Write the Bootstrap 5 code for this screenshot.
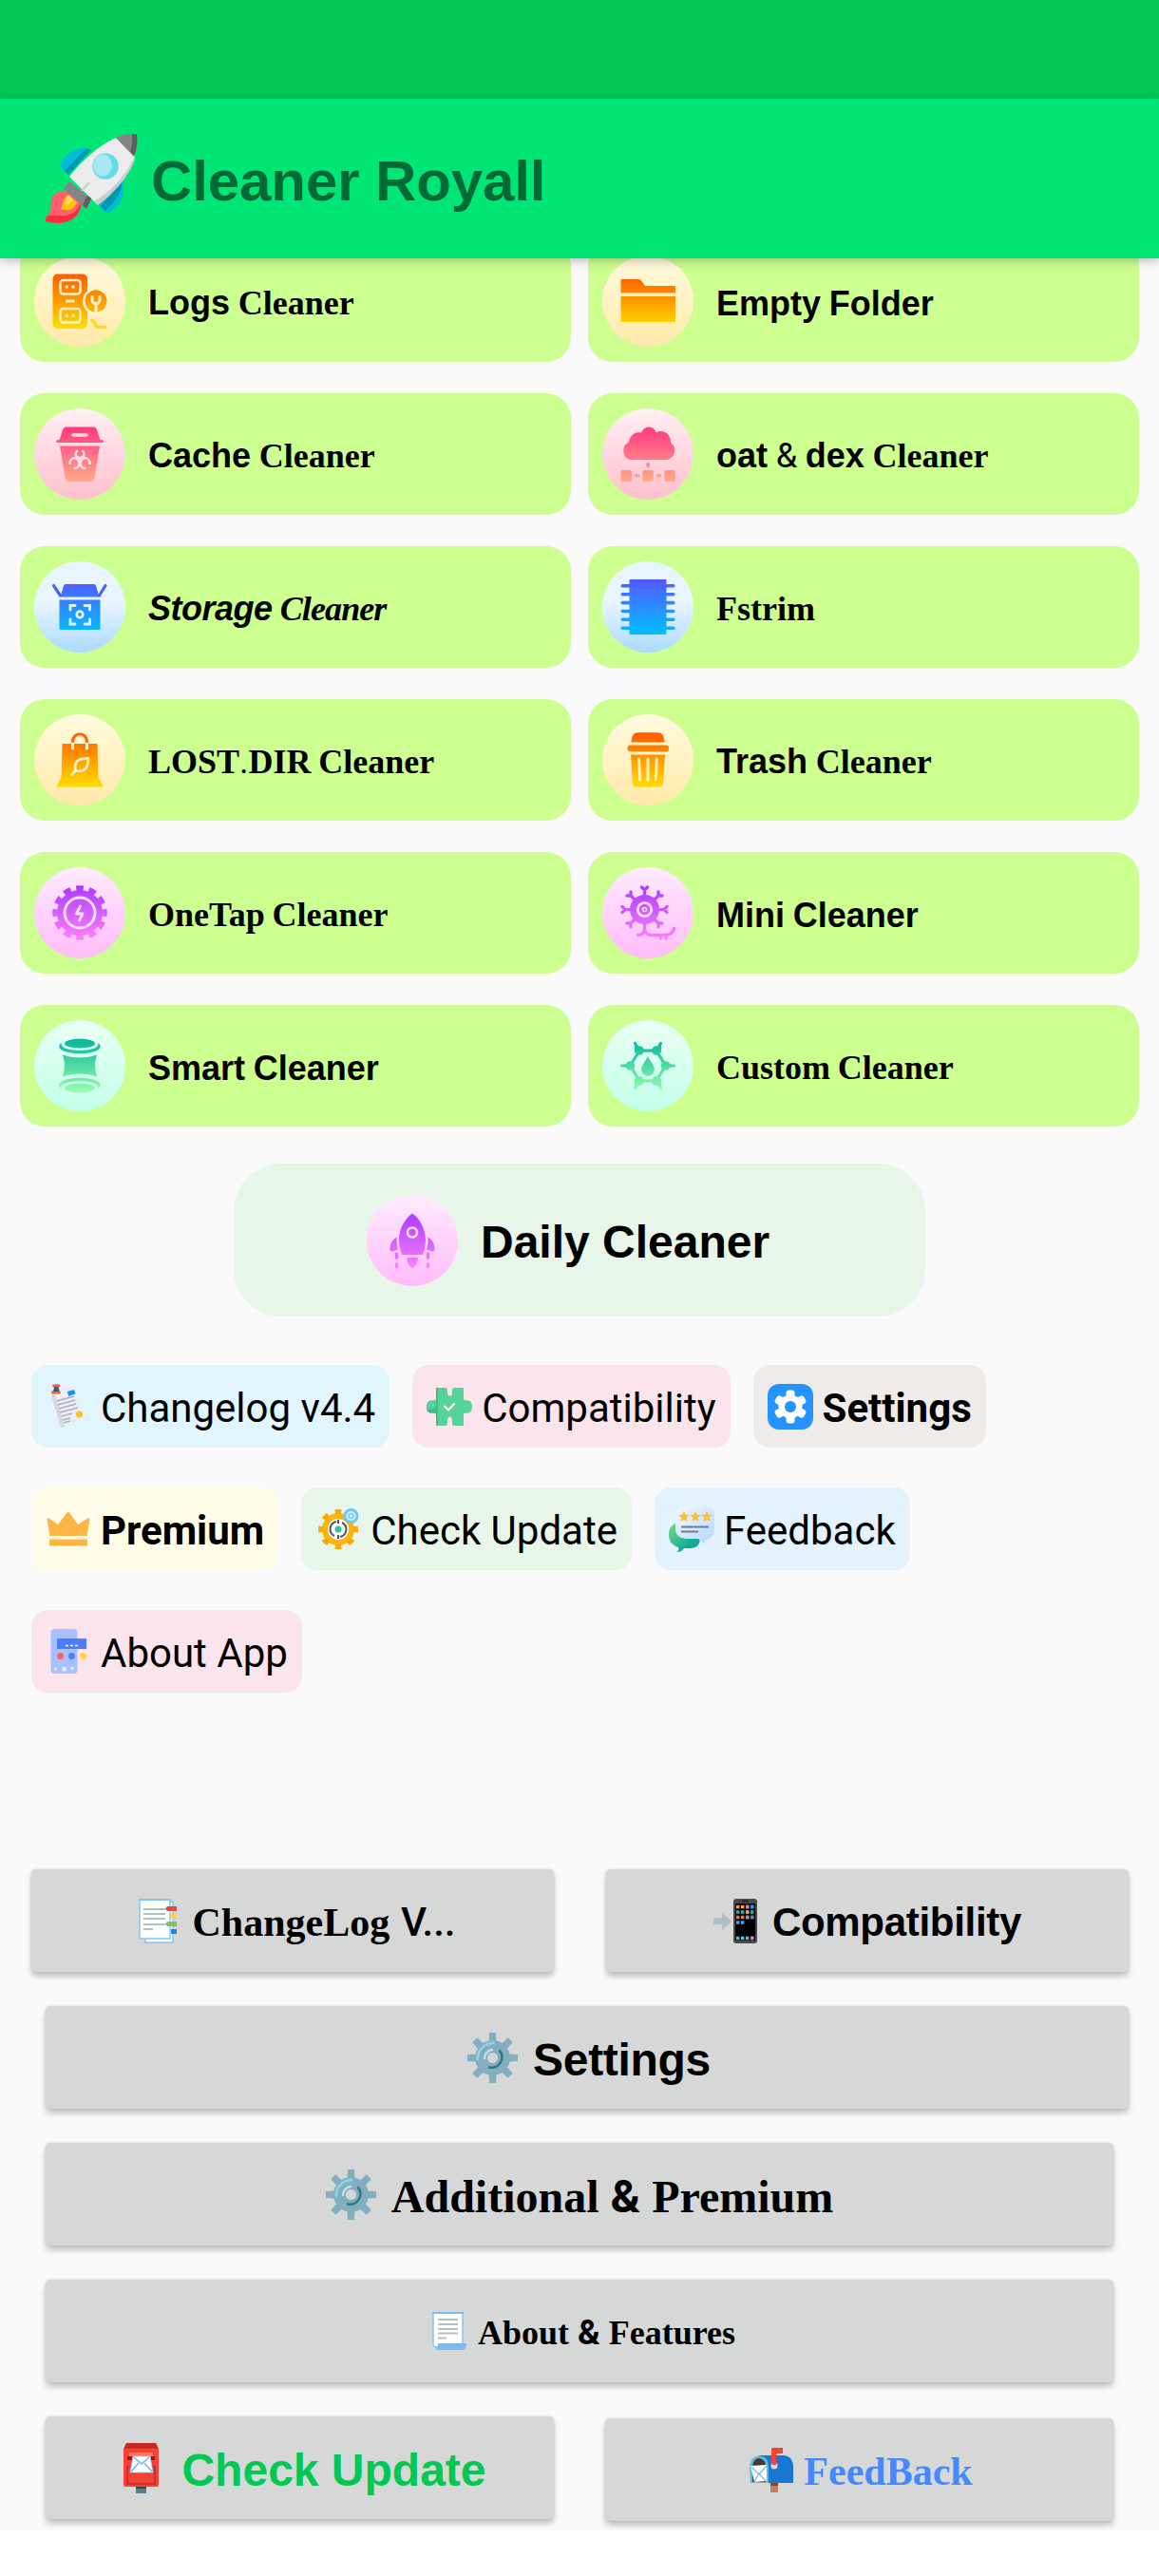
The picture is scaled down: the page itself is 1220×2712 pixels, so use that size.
<!DOCTYPE html>
<html lang="en">
<head>
<meta charset="utf-8">
<meta name="viewport" content="width=device-width, initial-scale=1">
<title>Cleaner Royall</title>
<link href="https://cdn.jsdelivr.net/npm/bootstrap@5.3.0/dist/css/bootstrap.min.css" rel="stylesheet">
<style>
  body { background:#fff; color:#000; font-family:"Liberation Sans",Arial,sans-serif; }
  .screen { width:1220px; height:2664px; background:#fafafa; }
  .statusbar { height:104px; background:#00c853; }
  .appbar { height:168px; background:#00e676; padding-left:48px; z-index:2; box-shadow:0 3px 10px rgba(0,0,0,.24); }
  .appname { font-size:60px; color:#006a36; margin-left:14px; letter-spacing:-.1px; }
  .lbl { padding-top:5px; line-height:1.15; white-space:pre; }
  .serif { font-family:"Liberation Serif","Times New Roman",serif; font-weight:700; }
  .sans { font-family:"Liberation Sans",Arial,sans-serif; font-weight:700; }
  .robo { font-family:Roboto,sans-serif; }
  .tools { margin-top:-19px; padding:0 21px; display:grid; grid-template-columns:580px 580px; column-gap:18px; row-gap:33px; }
  .tool { height:128px; border-radius:26px; background:#ccff90; padding-left:15px; font-size:36px; word-spacing:-1.3px; }
  .tool .lbl { margin-left:24px; }
  .slant { font-style:italic; letter-spacing:-.5px; }
  .slant .serif { letter-spacing:-.9px; }
  .daily { width:728px; height:161px; border-radius:50px; background:#e8f5e9; margin:39px 0 0 246px; padding-left:140px; font-size:48px; }
  .daily .lbl { margin-left:24px; }
  .disc { width:96px; height:96px; flex:none; border-radius:50%; }
  .d-yel { background:linear-gradient(#fffbdf,#ffe9a8); }
  .d-pnk { background:linear-gradient(#fff0f3,#ffc0cd); }
  .d-blu { background:linear-gradient(#e8f5ff 45%,#abdaff); }
  .d-pur { background:linear-gradient(#ffeaff,#ffbcf8); }
  .d-grn { background:linear-gradient(#eafff4,#c2ffe9); }
  .chips { margin:51px 33px 0; row-gap:42px; column-gap:24px; }
  .chip { height:87px; border-radius:17px; padding:0 15px; font-size:42px; font-family:Roboto,sans-serif; }
  .chip svg { width:48px; height:48px; margin-right:10px; flex:none; }
  .c-blue { background:#e1f5fe; } .c-pink { background:#fce4ec; } .c-brown { background:#efebe9; }
  .c-yellow { background:#fffde7; } .c-green { background:#e8f5e9; } .c-azure { background:#e3f2fd; }
  .panel { margin:186px 32px 0 33px; row-gap:36px; }
  .key { height:108px; border-radius:5px; background:#d6d7d7; font-size:42px; box-shadow:0 5px 6px rgba(0,0,0,.22),0 0 3px rgba(0,0,0,.12); }
  .key svg { flex:none; }
  .half { width:550px; } .half-s { width:535px; }
  .inset-l { margin-left:15px; } .inset-r { margin-right:16px; }
  .big { font-size:48px; } .sm36 { font-size:36px; }
  .drop2 { margin-top:2px; }
  .lead9 { padding-left:9px; } .lead4 { padding-left:4px; } .lead12 { padding-left:11px; }
  .snug { letter-spacing:-.3px; }
  .green-t { color:#00c853; } .blue-t { color:#448aff; }
</style>
<script src="https://cdn.jsdelivr.net/npm/bootstrap@5.3.0/dist/js/bootstrap.bundle.min.js"></script>
</head>
<body>
<!-- shared gradients -->
<svg width="0" height="0" class="position-absolute">
  <defs>
    <linearGradient id="gy" gradientUnits="userSpaceOnUse" x1="0" y1="19" x2="0" y2="77"><stop offset="0" stop-color="#ff5900"/><stop offset="1" stop-color="#ffdf00"/></linearGradient>
    <linearGradient id="gp" gradientUnits="userSpaceOnUse" x1="0" y1="19" x2="0" y2="77"><stop offset="0" stop-color="#ff3881"/><stop offset="1" stop-color="#ffa98d"/></linearGradient>
    <linearGradient id="gb" gradientUnits="userSpaceOnUse" x1="0" y1="19" x2="0" y2="77"><stop offset="0" stop-color="#5558ff"/><stop offset="1" stop-color="#00c0ff"/></linearGradient>
    <linearGradient id="gv" gradientUnits="userSpaceOnUse" x1="0" y1="19" x2="0" y2="77"><stop offset="0" stop-color="#a93aff"/><stop offset="1" stop-color="#ff81ff"/></linearGradient>
    <linearGradient id="gg" gradientUnits="userSpaceOnUse" x1="0" y1="19" x2="0" y2="77"><stop offset="0" stop-color="#00b59c"/><stop offset="1" stop-color="#9cffac"/></linearGradient>
    <linearGradient id="bub" x1="0" y1="0" x2="1" y2="1"><stop offset="0" stop-color="#f4f9ff"/><stop offset="1" stop-color="#b3d6ff"/></linearGradient>
    <linearGradient id="bub2" x1="0" y1="0" x2="1" y2="1"><stop offset="0" stop-color="#7fdd86"/><stop offset=".7" stop-color="#0ead93"/></linearGradient>
    <symbol id="cog" viewBox="0 0 53 53">
      <g fill="#82aec0"><circle cx="26.500" cy="26.500" r="18.500"/>
        <g id="teeth4"><path id="tooth" d="M22.500 12 23 0h7l.5 12z"/><use href="#tooth" transform="rotate(90 26.500 26.500)"/><use href="#tooth" transform="rotate(180 26.500 26.500)"/><use href="#tooth" transform="rotate(270 26.500 26.500)"/></g>
        <use href="#teeth4" transform="rotate(45 26.500 26.500)"/></g>
      <path d="M11 28A16 16 0 0 1 27 11" fill="none" stroke="#8fd0e2" stroke-width="3" stroke-linecap="round"/>
      <path d="M18 27a9 9 0 0 1 8-9" fill="none" stroke="#b9e4ea" stroke-width="2.500" stroke-linecap="round"/>
      <path d="M34 19a11 11 0 0 1-11 17.500" fill="none" stroke="#2f7889" stroke-width="2.500" stroke-linecap="round"/>
      <circle cx="26.500" cy="26.500" r="5.500" fill="#d6d7d7"/>
    </symbol>
  </defs>
</svg>

<div class="screen overflow-hidden">
  <div class="statusbar"></div>
  <header class="appbar position-relative d-flex align-items-center">
    <svg width="97" height="94" viewBox="0 0 97 94">
      <path d="M48 17C38 12 24 17 16 30c-2 5 3 9 8 12z" fill="#00bcd9"/><path d="M48 17 43 15 20 39l4 4z" fill="#0097b2"/>
      <path d="M80 49c5 13 0 27-14 34-6 0-8-4-10-8z" fill="#00bcd9"/><path d="M80 49c1 10-3 18-17 32l-5-5z" fill="#0097b2"/>
      <path d="M20 60C5 61 6 70 5 80c-2 5-5 7-5 11 6 3 17 4 25 0 8-4 13-11 12-20z" fill="#ff5f6e"/>
      <path d="M37 71c-2 11-12 16-22 15-6 0-12-1-14 1l-1 5c8 2 18 3 26-1s12-12 11-20z" fill="#ff2b3b"/>
      <path d="M24 64c-6 3-5 10-8 15 8 3 14 1 17-7z" fill="#ffc107"/><path d="M25 65c-4 2-4 6-5 9 5 1 7-2 9-5z" fill="#ffd75e"/>
      <path d="M74 4C56 12 38 28 25 45L54 74C73 61 88 41 94 23z" fill="#ececec"/>
      <path d="M94 23C85 43 70 60 51 71l4 4C73 62 88 44 94 27z" fill="#ccc"/>
      <path d="M74 4C82 0 90-1 96 1c1 8 0 16-3 23z" fill="#858585"/><path d="M91 0h5c1 8 0 16-3 23l-4-5c2-6 3-12 2-18z" fill="#5e5e5e"/>
      <path d="M25 50 48 68 43 79 19 58z" fill="#858585"/><path d="M44 65l4 3-5 11-4-4z" fill="#5e5e5e"/>
      <path d="M46 51 38 60" stroke="#ccc" stroke-width="2"/>
      <circle cx="63" cy="34" r="13.700" fill="#62dbea"/><ellipse cx="60" cy="33" rx="10" ry="11.500" fill="#a7e8f0"/>
    </svg>
    <span class="lbl appname fw-bold">Cleaner Royall</span>
  </header>

  <main>
    <section class="tools">
      <div class="tool d-flex align-items-center">
        <svg class="disc d-yel" viewBox="0 0 96 96"><g fill="url(#gy)"><rect x="19.500" y="19.500" width="36.500" height="57.500" rx="5"/></g>
          <circle cx="65" cy="48" r="14" fill="#fff3cb"/><circle cx="65" cy="48" r="11.500" fill="url(#gy)"/>
          <g fill="none" stroke="#fff1c4" stroke-width="2.400"><rect x="27.500" y="26" width="21" height="14.500" rx="3"/><rect x="27.500" y="56" width="21" height="14.500" rx="3"/><path d="M33 48h9.500M61 42v5c0 5 8 5 8 0v-5M65 50v12" stroke-width="3"/></g>
          <g fill="#fff1c4"><circle cx="34.500" cy="33" r="1.800"/><circle cx="41" cy="33" r="1.800"/><circle cx="34.500" cy="63.200" r="1.800"/><circle cx="41" cy="63.200" r="1.800"/></g>
          <path d="M60.500 68.500c4 0 3 7 7 7H75" fill="none" stroke="#ffd91a" stroke-width="3.400" stroke-linecap="round"/></svg>
        <span class="lbl"><span class="sans">Logs</span> <span class="serif">Cleaner</span></span>
      </div>
      <div class="tool d-flex align-items-center">
        <svg class="disc d-yel" viewBox="0 0 96 96"><path fill="url(#gy)" d="M19.500 26q0-1 1-1H38q2 0 3 1.500l4 5.500h31q1 0 1 1v6.500H19.500zM19.500 43H77v26q0 1-1 1H20.500q-1 0-1-1z"/></svg>
        <span class="lbl sans">Empty Folder</span>
      </div>
      <div class="tool d-flex align-items-center">
        <svg class="disc d-pnk" viewBox="0 0 96 96"><path fill="url(#gp)" d="M34 19.500H62q3 0 4 3L69.500 33H71q2 0 2 1.500T71 36H25q-2 0-2-1.500t2-1.500h1.500L30 22.500q1-3 4-3zM27 39.500H69L63.500 73q-.5 4-4 4h-23q-3.500 0-4-4z"/>
          <path d="M41 28H55" stroke="#ffdce3" stroke-width="3.400" stroke-linecap="round"/>
          <g fill="none" stroke="#ffdce3" stroke-width="2.500" stroke-linecap="round"><path d="M45 45c-3 3-1 7 3 7s6-4 3-7M48 52v6M37.500 58c0-6 7-8 9-3 2 4 0 8-4 8M58.500 58c0-6-7-8-9-3-2 4 0 8 4 8"/></g></svg>
        <span class="lbl"><span class="sans">Cache</span> <span class="serif">Cleaner</span></span>
      </div>
      <div class="tool d-flex align-items-center">
        <svg class="disc d-pnk" viewBox="0 0 96 96"><g fill="url(#gp)"><path d="M29 54a10 10 0 0 1-1-18.500C29 27 36 24 41 25.500c3-8 13-8 16 0C64 21 73 28 72 36a10 10 0 0 1-4 18z"/><rect x="46.500" y="57" width="3.400" height="5.500" rx="1.500"/><rect x="19.500" y="65" width="11.500" height="12" rx="2"/><rect x="42.300" y="65" width="11.500" height="12" rx="2"/><rect x="65.300" y="65" width="11.500" height="12" rx="2"/><rect x="34" y="69" width="5.500" height="3.400" rx="1.500"/><rect x="56.500" y="69" width="5.500" height="3.400" rx="1.500"/></g></svg>
        <span class="lbl"><span class="sans">oat</span> <span class="robo">&amp;</span> <span class="sans">dex</span> <span class="serif">Cleaner</span></span>
      </div>
      <div class="tool d-flex align-items-center">
        <svg class="disc d-blu" viewBox="0 0 96 96"><g fill="url(#gb)"><path d="M33 24H63q1.500 0 2 1.500l3.500 12H27.500l3.500-12Q31.500 24 33 24zM26.500 40.500h43V71q0 1-1 1h-41q-1 0-1-1z"/></g>
          <path d="M20.500 25.500 27.500 36M75 25.500 68.500 36" stroke="#4d60ff" stroke-width="3.200" stroke-linecap="round"/>
          <g fill="none" stroke="#dff2ff" stroke-width="2.800" stroke-linecap="round"><path d="M38 51v-4.500h5M53 46.500h5.500V51M58.500 61v5H53M43 66h-5v-5"/><circle cx="48" cy="56" r="3.300"/></g></svg>
        <span class="lbl slant"><span class="sans">Storage</span> <span class="serif">Cleaner</span></span>
      </div>
      <div class="tool d-flex align-items-center">
        <svg class="disc d-blu" viewBox="0 0 96 96"><g fill="url(#gb)"><rect x="28.500" y="19" width="39" height="58" rx="1"/><rect x="19.500" y="24" width="57" height="3.600" rx="1.700"/><rect x="19.500" y="32.900" width="57" height="3.600" rx="1.700"/><rect x="19.500" y="41.800" width="57" height="3.600" rx="1.700"/><rect x="19.500" y="50.700" width="57" height="3.600" rx="1.700"/><rect x="19.500" y="59.500" width="57" height="3.600" rx="1.700"/><rect x="19.500" y="68.400" width="57" height="3.600" rx="1.700"/></g></svg>
        <span class="lbl serif">Fstrim</span>
      </div>
      <div class="tool d-flex align-items-center">
        <svg class="disc d-yel" viewBox="0 0 96 96"><path fill="url(#gy)" d="M30 31H65.500q1 0 1 1l1 34L72 75q.5 1.500-1 1.500H25q-1.500 0-1-1.500l4.500-9 1-34q0-1 .5-1z"/>
          <path d="M40.500 32v-3c0-11 15-11 15 0v3" fill="none" stroke="#ff6608" stroke-width="3.200"/><path d="M40.500 31v5M55.500 31v5" stroke="#fff0bf" stroke-width="3" stroke-linecap="round"/>
          <path d="M56.500 46.500c-10 0-15 3-13 13 10 2 14-4 13-13zM39.500 63.500l4-4" fill="none" stroke="#fff0bf" stroke-width="2.800" stroke-linecap="round"/></svg>
        <span class="lbl serif">LOST<span class="robo fw-normal">.</span>DIR Cleaner</span>
      </div>
      <div class="tool d-flex align-items-center">
        <svg class="disc d-yel" viewBox="0 0 96 96"><path fill="url(#gy)" d="M30.500 29.500C31 22 33 19.300 38 19.300H58c5 0 7 2.700 7.500 10.200zM29 32.500H67.500q2.500 0 2.500 3.400t-2.500 3.400H29q-2.500 0-2.500-3.400t2.500-3.400zM30 42.500H66L64 73q-.3 3.500-4 3.500H36q-3.700 0-4-3.500z"/>
          <path d="M38.500 47l1 22M48 47v22M57.300 47l-1 22" stroke="#ffefb9" stroke-width="3" stroke-linecap="round"/></svg>
        <span class="lbl"><span class="sans">Trash</span> <span class="serif">Cleaner</span></span>
      </div>
      <div class="tool d-flex align-items-center">
        <svg class="disc d-pur" viewBox="0 0 96 96"><circle cx="48" cy="48" r="24" fill="url(#gv)"/><circle cx="48" cy="48" r="25.500" fill="none" stroke="url(#gv)" stroke-width="6.500" pathLength="24" stroke-dasharray="1.150 .850" stroke-dashoffset=".575"/>
          <circle cx="48" cy="48" r="16" fill="none" stroke="#fddcfd" stroke-width="3"/><path d="M48.500 41 44.500 49H51L47.500 56" fill="none" stroke="#fddcfd" stroke-width="2.800" stroke-linejoin="round" stroke-linecap="round"/></svg>
        <span class="lbl serif">OneTap Cleaner</span>
      </div>
      <div class="tool d-flex align-items-center">
        <svg class="disc d-pur" viewBox="0 0 96 96"><circle cx="44.500" cy="44.500" r="15.500" fill="url(#gv)"/>
          <g fill="none" stroke="url(#gv)" stroke-width="3.400" stroke-linecap="round" stroke-linejoin="round">
            <path d="M41.500 21l2.500 2.500h1l2.500-2.500M44.600 23.500 44.500 34M21 41.500l2.500 2.500v1L21 47.500M23.500 44.500 34 44.600M68 41.500l-2.500 2.500v1l2.500 2.500M65.500 44.500 55 44.600"/>
            <path d="M26 30h3.500l.5-.5v-3.500M30 30l7 7M63 30h-3.500l-.5-.5v-3.500M59 30l-7 7M26 59h3.500l.5.5v3.500M30 59l7-7M63 59h-3.500l-.5.5v3.500M59 59l-7-7"/>
            <path d="M44.500 58v8c0 3-3 5.500-7 5.500M44.500 64c0 5 3 7.500 7 7.500H66c5 0 9-3 9.500-7M61.500 73v2M67 73v2"/></g>
          <path d="M33.500 34c3 1 6 0 7-4h8c1 4 4 5 7 4-1 3-1 7 2 8v5c-3 1-3 5-2 8-3-1-6 0-7 4h-8c-1-4-4-5-7-4 1-3 1-7-2-8v-5c3-1 3-5 2-8z" fill="url(#gv)"/>
          <circle cx="44.500" cy="44.500" r="7.200" fill="none" stroke="#fddcfd" stroke-width="2.800"/><circle cx="44.500" cy="44.500" r="2" fill="none" stroke="#fddcfd" stroke-width="1.500"/></svg>
        <span class="lbl sans">Mini Cleaner</span>
      </div>
      <div class="tool d-flex align-items-center">
        <svg class="disc d-grn" viewBox="0 0 96 96"><g fill="url(#gg)"><path d="M32 24.500c0-6.500 32-6.500 32 0s-32 6.500-32 0zM32 71.500c0-6.500 32-6.500 32 0s-32 6.500-32 0zM30 36.500c10 4 26 4 36 0-2.500 8-2.500 15 0 23-10-4-26-4-36 0 2.500-8 2.500-15 0-23zM29 24c-5 10.500 43 10.500 38 0 4 2 3 6 0 7.500-9 5-29 5-38 0-3-1.500-4-5.500 0-7.500zM29 72c-5-10.500 43-10.500 38 0 4-2 3-6 0-7.500-9-5-29-5-38 0-3 1.500-4 5.500 0 7.500z"/></g></svg>
        <span class="lbl sans">Smart Cleaner</span>
      </div>
      <div class="tool d-flex align-items-center">
        <svg class="disc d-grn" viewBox="0 0 96 96"><g fill="none" stroke="url(#gg)" stroke-width="3.200" stroke-linecap="round"><path d="M39 32.100 57 32 66.500 48 57 64 39 63.900 29.500 48zM34.500 24.500l4.500 8M61.500 24.500l-4.500 8M34.500 71.500l4.500-8M61.500 71.500l-4.500-8M20.500 48l9 .1M75.500 48l-9 .1"/></g>
          <g fill="url(#gg)"><circle cx="39" cy="32" r="4.800"/><circle cx="57" cy="32" r="4.800"/><circle cx="66.500" cy="48" r="4.800"/><circle cx="29.500" cy="48" r="4.800"/><circle cx="39" cy="64" r="4.800"/><circle cx="57" cy="64" r="4.800"/><path d="M48 38c3 6 6.800 9.500 6.800 14a6.800 6.800 0 0 1-13.600 0c0-4.500 3.800-8 6.800-14zM34 24.500v10l8-2zM62 24.500v10l-8-2zM34 71.500v-10l8 2zM62 71.500v-10l-8 2zM20.500 48l9-4v8zM75.500 48l-9-4v8z"/></g></svg>
        <span class="lbl serif">Custom Cleaner</span>
      </div>
    </section>

    <div class="daily d-flex align-items-center">
      <svg class="disc d-pur" viewBox="0 0 96 96"><path fill="url(#gv)" d="M48 19.500C56 25 62 36 62 47c0 6-1 11-3 16H37c-2-5-3-10-3-16 0-11 6-22 14-27.500zM31.500 44.500c0 5 0 9 1.500 13l-6 2q-2.500.5-2.500-2c0-6 2-10 7-13zM64.500 44.500c0 5 0 9-1.500 13l6 2q2.500.5 2.500-2c0-6-2-10-7-13zM42.500 66h11.500c0 5-2.500 9-6 11-3.500-2-6-6-5.500-11z"/>
        <circle cx="48" cy="39.500" r="5" fill="none" stroke="#fddcfd" stroke-width="2.600"/>
        <path d="M31.500 62v4M64.500 62v4" stroke="#ea6dff" stroke-width="3.300" stroke-linecap="round"/><path d="M31.500 73v2.500M64.500 73v2.500" stroke="#fb7cff" stroke-width="3.300" stroke-linecap="round"/></svg>
      <span class="lbl sans">Daily Cleaner</span>
    </div>

    <nav class="chips d-flex flex-column align-items-start">
      <div class="d-flex gap-4">
        <div class="chip c-blue d-flex align-items-center">
          <svg viewBox="0 0 48 48"><path d="M5 8 29 1 43 38 16 46z" fill="#eceef1"/><path d="M5 8 9 7 20 45l-4 1z" fill="#d3d8df"/><path d="M12 18l18-5M13 22l18-5M14 26l18-5M15 30l19-5M17 34l11-3M18 38l8-2M19 41l7-2" stroke="#a9b0bf" stroke-width="1.500"/><path d="M23 8l7-2 1.500 4.500L24 13z" fill="#1494f0"/><circle cx="35.500" cy="32" r="3.400" fill="#fcc21b"/><path d="M8.500 2h5.500M7.500 9h7" stroke="#f25a41" stroke-width="2.800" stroke-linecap="round"/><path d="M9 3h4.500l1 5H8z" fill="#455a64"/></svg>
          <span class="lbl">Changelog v4.4</span>
        </div>
        <div class="chip c-pink d-flex align-items-center">
          <svg viewBox="0 0 48 48"><path fill="#56d39a" d="M10 4h10c2 0 2 3 2 5 0 5 5 5 5 0 0-2 0-5 2-5h10v12c0 3 9-2 9 8s-9 5-9 8v12H29c-2 0-2-3-2-5 0-6-5-6-5 0 0 2 0 5-2 5H10V32c0-3-10 2-10-8s10-5 10-8z"/><path d="M10 4h2v40h-2V32c0-3-10 2-10-8 1 5 10 3 10-3z" fill="#3fbd82"/><path d="M18.500 23l4.500 4.500 6.500-7" fill="none" stroke="#fff" stroke-width="2.200"/></svg>
          <span class="lbl">Compatibility</span>
        </div>
        <div class="chip c-brown d-flex align-items-center">
          <svg viewBox="0 0 48 48"><rect width="48" height="48" rx="12" fill="#2492ff"/><g fill="#fff"><circle cx="24" cy="24" r="12.500"/><g id="st"><rect x="19.500" y="6.500" width="9" height="35" rx="3"/></g><use href="#st" transform="rotate(60 24 24)"/><use href="#st" transform="rotate(120 24 24)"/></g><circle cx="24" cy="24" r="6" fill="#2492ff"/></svg>
          <span class="lbl fw-bold">Settings</span>
        </div>
      </div>
      <div class="d-flex gap-4">
        <div class="chip c-yellow d-flex align-items-center">
          <svg viewBox="0 0 48 48"><path fill="#ffb544" d="M1.500 13.500q0-2 2-1L13 19 22.500 6.500q1.300-1.500 2.500 0L34 19l10.500-6.500q2-1 2 1L43.500 31H4.500zM4 34.500H44V40q0 1.500-1.500 1.500h-37Q4 41.500 4 40z"/></svg>
          <span class="lbl fw-bold">Premium</span>
        </div>
        <div class="chip c-green d-flex align-items-center">
          <svg viewBox="0 0 48 48"><circle cx="24" cy="24" r="14" fill="#fff" stroke="#ffb30f" stroke-width="6"/><circle cx="24" cy="24" r="18.500" fill="none" stroke="#f9a806" stroke-width="5" pathLength="16" stroke-dasharray=".9 1.100" stroke-dashoffset=".45"/><circle cx="24" cy="24" r="3.500" fill="#2cc5a5"/><path d="M22 16a8 8 0 0 0-2 15M26 32a8 8 0 0 0 2-15M24 14v4M24 30v4" fill="none" stroke="#455a64" stroke-width="2"/><circle cx="37.500" cy="10" r="6.500" fill="#dbf2fd" stroke="#6dc8f2" stroke-width="3"/><circle cx="37.500" cy="10" r="2.500" fill="none" stroke="#6dc8f2" stroke-width="1.500"/></svg>
          <span class="lbl">Check Update</span>
        </div>
        <div class="chip c-azure d-flex align-items-center">
          <svg viewBox="0 0 48 48"><path d="M8 17C2 20 0 24 0 30c0 7 4 11 10 13 1 2 0 4-2 5 4 0 6-1 8-4h6c7 0 10-3 11-9z" fill="url(#bub2)"/><path d="M17 0H38q10 0 10 10V24q0 9-9 11-2 1 0 4-5-1-8-5H20Q7 34 7 23V10Q7 0 17 0z" fill="url(#bub)"/><g fill="#fdc02f"><path id="sr" d="M16 5l1.700 3.500 4 .5-3 2.800.8 4L16 14l-3.500 1.800.8-4-3-2.800 4-.5z"/><use href="#sr" x="12"/><use href="#sr" x="24"/></g><path d="M13 21.500h29M13 26.500h18" stroke="#707a88" stroke-width="1.800"/></svg>
          <span class="lbl">Feedback</span>
        </div>
      </div>
      <div class="d-flex">
        <div class="chip c-pink d-flex align-items-center">
          <svg viewBox="0 0 48 48"><rect x="5.500" width="28" height="47" rx="4" fill="#a8c0ff"/><path d="M12 10H43v11H12z" fill="#4d7dfc"/><path d="M21 17.500h3M26 17.500h3M31 17.500h3" stroke="#fff" stroke-width="1.600"/><circle cx="15.500" cy="28.500" r="3.400" fill="#ff6157"/><circle cx="27.500" cy="28.500" r="3.400" fill="#4d7dfc"/><circle cx="39.500" cy="28.500" r="3.400" fill="#ffcf4a"/><path d="M11.500 39.500l-3 2.500 3 2.500M26 40h4l-2 4z" fill="#e8eeff"/><circle cx="19.500" cy="42" r="2.500" fill="#e8eeff"/></svg>
          <span class="lbl">About App</span>
        </div>
      </div>
    </nav>

    <section class="panel d-flex flex-column">
      <div class="d-flex justify-content-between">
        <div class="key half lead9 d-flex align-items-center justify-content-center">
          <svg class="me-3" width="41" height="47" viewBox="0 0 41 47"><path d="M7 3h29v43H7z" fill="#fff" stroke="#82c5f5" stroke-width="1.500"/><path d="M1 1h32v41H1z" fill="#fff" stroke="#82c5f5" stroke-width="1.500"/><path d="M0 0h33v2H0z" fill="#82c5f5"/><path d="M5 11h23M5 16h23M5 21h23M5 27h23M5 32h10" stroke="#b0bec5" stroke-width="2"/><path d="M30 8h10v5H30l-2-2.500z" fill="#f44336"/><path d="M34 15.500h6v5h-6z" fill="#fdd042"/><path d="M30 24h10v5H30l-2-2.500z" fill="#8bc34a"/><path d="M34 32h6v5h-6z" fill="#1b87dc"/></svg>
          <span class="lbl"><span class="serif">ChangeLog</span> <span class="robo fw-medium">V...</span></span>
        </div>
        <div class="key half d-flex align-items-center justify-content-center">
          <svg class="me-3" width="46" height="47" viewBox="0 0 46 47"><path d="M0 20h9v-6l10 10L9 33v-6H0z" fill="#b0bec5"/><rect x="21" width="25" height="47" rx="3" fill="#4a4a4a"/><path d="M23 5h21v39H23z" fill="#000"/><path d="M30 2.500h7" stroke="#222" stroke-width="2"/><g stroke-width="3.400" stroke-dasharray="3.400 1.600"><path d="M24 8.500h19" stroke="#ff9e4a"/><path d="M24 14h19" stroke="#26b6b0"/><path d="M24 19.500h19" stroke="#ff7043"/><path d="M24 25h9" stroke="#3da5f5"/><path d="M24 41.500h19" stroke="#4fc3d7"/></g><path d="M34 8.500h3.400M34 19.500h3.400M39 41.500h3.400" stroke="#ff6da7" stroke-width="3.400"/><path d="M39 8.500h3.400M39 19.500h3.400" stroke="#2196f3" stroke-width="3.400"/><path d="M34 14h3.400" stroke="#ffa726" stroke-width="3.400"/></svg>
          <span class="lbl sans snug">Compatibility</span>
        </div>
      </div>
      <div class="key big inset-l lead4 d-flex align-items-center justify-content-center">
        <svg class="me-3" width="53" height="53"><use href="#cog"/></svg><span class="lbl sans snug">Settings</span>
      </div>
      <div class="key big inset-l inset-r d-flex align-items-center justify-content-center">
        <svg class="me-3" width="53" height="53"><use href="#cog"/></svg><span class="lbl serif">Additional <span class="robo">&amp;</span> Premium</span>
      </div>
      <div class="key sm36 inset-l inset-r lead9 d-flex align-items-center justify-content-center">
        <svg width="48" height="40" viewBox="0 0 48 40"><path d="M1 1h31v36H4q-3 0-3-4z" fill="#fff" stroke="#82c5f5" stroke-width="1.500"/><path d="M0 0h33v2H0z" fill="#72bff0"/><path d="M6 33h30q0 6-4 7H3q3-2 3-7z" fill="#72bff0"/><path d="M6 8h21M6 13h21M6 18h21M6 22.500h21M6 27.500h9" stroke="#b0bec5" stroke-width="1.800"/></svg>
        <span class="lbl serif">About <span class="robo">&amp;</span> Features</span>
      </div>
      <div class="d-flex justify-content-between inset-l inset-r">
        <div class="key half-s big lead12 d-flex align-items-center justify-content-center">
          <svg class="me-4" width="37" height="53" viewBox="0 0 37 53"><path d="M13 45h11v8H13z" fill="#607d8b"/><path d="M13 45h11v3H13z" fill="#37474f"/><path d="M0 5h37v39q0 2-2 2H2q-2 0-2-2z" fill="#f44336"/><path d="M4 0h29q2 0 3 5H1q1-5 3-5z" fill="#c62828"/><path d="M1 5h35" stroke="#b71c1c"/><path d="M6 10h25v4H6z" fill="#ff7555"/><path d="M4 14h29v4H4z" fill="#a31515"/><path d="M4 25h29v18H4z" fill="none" stroke="#c62828" stroke-width="1.600"/><path d="M10 14h18l3 17H7z" fill="#fff" stroke="#90caf9" stroke-width=".8"/><path d="M11 15l8 7 8-7M8 30l8-9M30 30l-8-9" fill="none" stroke="#64b5f6" stroke-width="1.400"/></svg>
          <span class="lbl sans green-t">Check Update</span>
        </div>
        <div class="key half-s drop2 lead4 d-flex align-items-center justify-content-center">
          <svg width="57" height="47" viewBox="0 0 57 47"><path d="M22 36h8v11h-8z" fill="#c97b5c"/><path d="M22 36h8v4h-8z" fill="#6d4c41"/><path d="M10 8H36q10 1 10 13V37H10z" fill="#1976d2"/><path d="M0 20Q1 9 10 8.500 20 9 20 20V37H1z" fill="#5bb8e8"/><path d="M3 20Q4 11 10 11q7 1 7 9v16H3z" fill="#4e342e"/><path d="M1 19l17-1v17L5 36z" fill="#fff"/><path d="M2 20l8 8 8-9M5 36l5-9 7 8" fill="none" stroke="#64c4ee" stroke-width="1.300"/><path d="M23 1q0-1 2-1h10v6h-7v12h-5z" fill="#f44336"/><circle cx="26" cy="19" r="3.500" fill="#cfd8dc"/><path d="M24 9h4v9h-4z" fill="#f44336"/></svg>
          <span class="lbl serif blue-t">FeedBack</span>
        </div>
      </div>
    </section>
  </main>
</div>
</body>
</html>
